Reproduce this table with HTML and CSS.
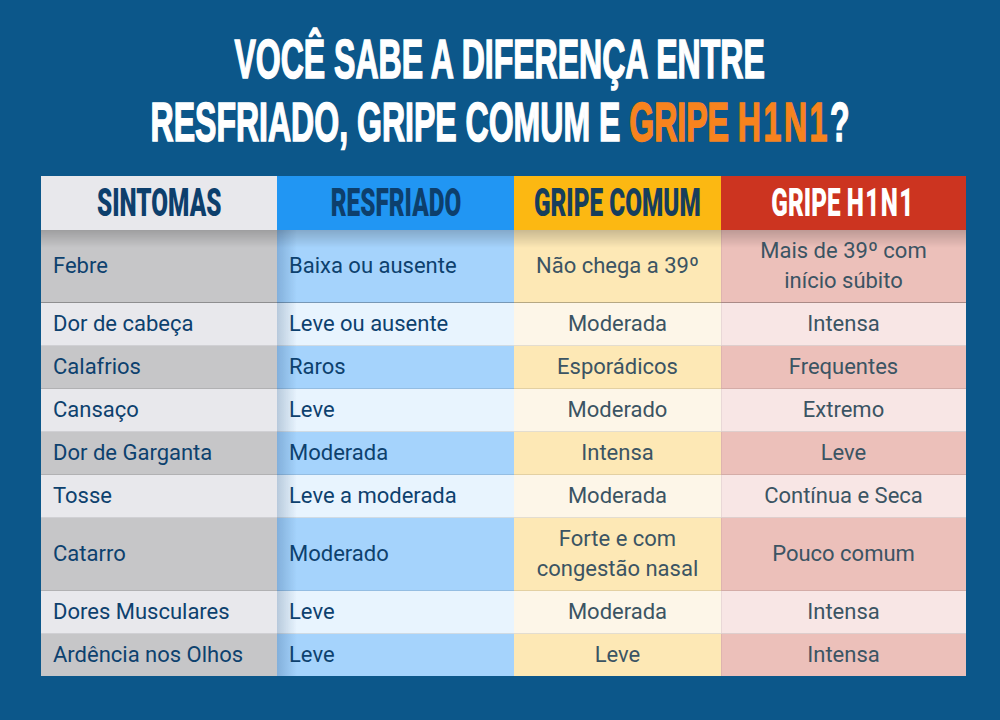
FILE: index.html
```html
<!DOCTYPE html>
<html lang="pt-BR">
<head>
<meta charset="utf-8">
<title>Resfriado, gripe comum e gripe H1N1</title>
<link rel="stylesheet" href="styles.css">
</head>
<body>
<main class="page">
  <h1 class="title">
    <span class="title-line"><span class="condensed">VOCÊ SABE A DIFERENÇA ENTRE</span></span>
    <span class="title-line"><span class="condensed">RESFRIADO, GRIPE COMUM E <em class="accent">GRIPE H<span class="one">1</span>N<span class="one">1</span></em>?</span></span>
  </h1>
  <div class="table">
    <div class="th th-sint"><span class="condensed">SINTOMAS</span></div>
    <div class="th th-resf"><span class="condensed">RESFRIADO</span></div>
    <div class="th th-comum"><span class="condensed">GRIPE COMUM</span></div>
    <div class="th th-h1n1"><span class="condensed">GRIPE H<span class="one">1</span>N<span class="one">1</span></span></div>

    <div class="td c1 dark first">Febre</div>
    <div class="td c2 dark first">Baixa ou ausente</div>
    <div class="td c3 dark first">Não chega a 39º</div>
    <div class="td c4 dark first">Mais de 39º com<br>início súbito</div>

    <div class="td c1 light">Dor de cabeça</div>
    <div class="td c2 light">Leve ou ausente</div>
    <div class="td c3 light">Moderada</div>
    <div class="td c4 light">Intensa</div>

    <div class="td c1 dark">Calafrios</div>
    <div class="td c2 dark">Raros</div>
    <div class="td c3 dark">Esporádicos</div>
    <div class="td c4 dark">Frequentes</div>

    <div class="td c1 light">Cansaço</div>
    <div class="td c2 light">Leve</div>
    <div class="td c3 light">Moderado</div>
    <div class="td c4 light">Extremo</div>

    <div class="td c1 dark">Dor de Garganta</div>
    <div class="td c2 dark">Moderada</div>
    <div class="td c3 dark">Intensa</div>
    <div class="td c4 dark">Leve</div>

    <div class="td c1 light">Tosse</div>
    <div class="td c2 light">Leve a moderada</div>
    <div class="td c3 light">Moderada</div>
    <div class="td c4 light">Contínua e Seca</div>

    <div class="td c1 dark">Catarro</div>
    <div class="td c2 dark">Moderado</div>
    <div class="td c3 dark">Forte e com<br>congestão nasal</div>
    <div class="td c4 dark">Pouco comum</div>

    <div class="td c1 light">Dores Musculares</div>
    <div class="td c2 light">Leve</div>
    <div class="td c3 light">Moderada</div>
    <div class="td c4 light">Intensa</div>

    <div class="td c1 dark last">Ardência nos Olhos</div>
    <div class="td c2 dark last">Leve</div>
    <div class="td c3 dark last">Leve</div>
    <div class="td c4 dark last">Intensa</div>
  </div>
</main>
</body>
</html>
```

FILE: styles.css
```css
html, body {
  margin: 0;
  padding: 0;
}

body {
  background: #0c578a;
  width: 1000px;
  height: 720px;
  overflow: hidden;
  font-family: "Roboto", "Liberation Sans", sans-serif;
}

.page {
  display: flex;
  flex-direction: column;
  align-items: flex-start;
  padding-top: 27px;
}

.title {
  margin: 0;
  width: 1000px;
  display: flex;
  flex-direction: column;
  align-items: stretch;
  font-family: "Liberation Sans", "Roboto", sans-serif;
  font-weight: 700;
  font-size: 56px;
  line-height: 63px;
  color: #ffffff;
  -webkit-text-stroke: 1.6px #ffffff;
}

.title-line {
  display: flex;
  justify-content: center;
  width: 1000px;
  height: 63px;
}

.condensed {
  display: inline-block;
  flex: none;
  transform: scaleX(0.572);
  transform-origin: center;
  white-space: nowrap;
}

.accent {
  font-style: normal;
  color: #f7831e;
  -webkit-text-stroke: 1.6px #f7831e;
}

.one {
  padding: 0 0.08em;
}

.table {
  margin: 23px 0 0 41px;
  display: grid;
  grid-template-columns: 236px 237px 207px 245px;
}

.th {
  height: 54px;
  display: flex;
  align-items: center;
  justify-content: center;
  font-family: "Roboto", "Liberation Sans", sans-serif;
  font-weight: 900;
  font-size: 38px;
  color: #0d3f6c;
}

.th .condensed {
  transform: scaleX(0.64);
}

.th .one {
  padding: 0 0.06em;
}

.th-sint { background: #e8e8ec; }
.th-resf { background: #2196f3; }
.th-comum { background: #fcb812; color: #173e5c; }
.th-h1n1 { background: #cc3420; color: #ffffff; }

.td {
  display: flex;
  align-items: center;
  padding: 6px 12px;
  font-size: 22px;
  line-height: 30px;
  border-bottom: 1px solid rgba(0, 0, 0, 0.1);
  color: #0d416e;
}

.td.last {
  border-bottom: none;
}

.c3, .c4 {
  justify-content: center;
  text-align: center;
  color: #3b5463;
}

.c1.dark { background-color: #c6c6c8; }
.c1.light { background-color: #e8e8ec; }
.c2.dark { background-color: #a5d3fc; }
.c2.light { background-color: #e8f4fe; }
.c3.dark { background-color: #fde8b5; }
.c3.light { background-color: #fdf6e8; }
.c4.dark { background-color: #ecc0ba; }
.c4.light { background-color: #f8e6e5; }

.c2 {
  background-image: linear-gradient(to right, rgba(10, 50, 100, 0.22), rgba(10, 50, 100, 0) 20px);
}

.first {
  background-image: linear-gradient(to bottom, rgba(0, 0, 0, 0.2), rgba(0, 0, 0, 0) 18px);
}

.c2.first {
  background-image: linear-gradient(to bottom, rgba(0, 0, 0, 0.2), rgba(0, 0, 0, 0) 18px),
    linear-gradient(to right, rgba(10, 50, 100, 0.22), rgba(10, 50, 100, 0) 20px);
}

.c4 {
  box-shadow: inset 1px 0 0 rgba(0, 0, 0, 0.06);
}
```
